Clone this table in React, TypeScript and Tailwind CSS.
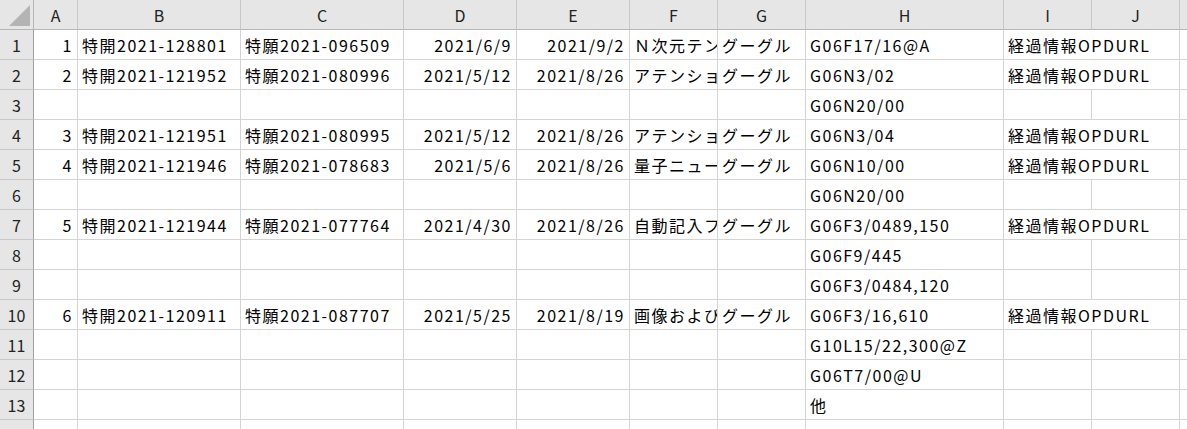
import React from "react";

// 列の幅（右の罫線を含む）
const cols = [
  { key: "A", w: "w-[44px]", align: "right" },
  { key: "B", w: "w-[163px]", align: "left" },
  { key: "C", w: "w-[163px]", align: "left" },
  { key: "D", w: "w-[113px]", align: "right" },
  { key: "E", w: "w-[113px]", align: "right" },
  { key: "F", w: "w-[88px]", align: "left" },
  { key: "G", w: "w-[88px]", align: "left" },
  { key: "H", w: "w-[198px]", align: "left" },
  { key: "I", w: "w-[88px]", align: "left" },
  { key: "J", w: "w-[88px]", align: "left" },
];

type Row = Partial<Record<string, string>>;

const rows: Row[] = [
  { A: "1", B: "特開2021-128801", C: "特願2021-096509", D: "2021/6/9", E: "2021/9/2", F: "Ｎ次元テンソルの処理", G: "グーグル", H: "G06F17/16@A", I: "経過情報OPDURL" },
  { A: "2", B: "特開2021-121952", C: "特願2021-080996", D: "2021/5/12", E: "2021/8/26", F: "アテンションベースの", G: "グーグル", H: "G06N3/02", I: "経過情報OPDURL" },
  { H: "G06N20/00" },
  { A: "3", B: "特開2021-121951", C: "特願2021-080995", D: "2021/5/12", E: "2021/8/26", F: "アテンションベースの", G: "グーグル", H: "G06N3/04", I: "経過情報OPDURL" },
  { A: "4", B: "特開2021-121946", C: "特願2021-078683", D: "2021/5/6", E: "2021/8/26", F: "量子ニューラルネット", G: "グーグル", H: "G06N10/00", I: "経過情報OPDURL" },
  { H: "G06N20/00" },
  { A: "5", B: "特開2021-121944", C: "特願2021-077764", D: "2021/4/30", E: "2021/8/26", F: "自動記入フォーム", G: "グーグル", H: "G06F3/0489,150", I: "経過情報OPDURL" },
  { H: "G06F9/445" },
  { H: "G06F3/0484,120" },
  { A: "6", B: "特開2021-120911", C: "特願2021-087707", D: "2021/5/25", E: "2021/8/19", F: "画像および動画の", G: "グーグル", H: "G06F3/16,610", I: "経過情報OPDURL" },
  { H: "G10L15/22,300@Z" },
  { H: "G06T7/00@U" },
  { H: "他" },
  {},
];

function Cell({ w, align, text }: { w: string; align: string; text?: string }) {
  return (
    <div
      className={`${w} shrink-0 h-[30px] border-r border-b border-[#d4d4d4] overflow-hidden whitespace-nowrap px-[4px] pt-[1px] flex items-center ${
        align === "right" ? "justify-end" : "justify-start"
      }`}
    >
      <span className="block">{text}</span>
    </div>
  );
}

export default function App() {
  return (
    <div className="w-[1187px] h-[429px] overflow-hidden bg-white text-black text-[16px] tracking-[1.5px] font-['Noto_Sans_CJK_JP',sans-serif]">
      {/* 列見出し */}
      <div className="flex h-[30px] bg-[#e6e6e6] tracking-normal">
        <div className="w-[34px] shrink-0 h-[30px] border-r border-b border-[#b6b6b6] relative">
          <svg width="34" height="30" className="absolute inset-0">
            <polygon points="30,5 30,26 9,26" fill="#b4b4b4" />
          </svg>
        </div>
        {cols.map((c) => (
          <div
            key={c.key}
            className={`${c.w} shrink-0 h-[30px] border-r border-[#c8c8c8] border-b border-b-[#b6b6b6] flex items-center justify-center text-[#222]`}
          >
            {c.key}
          </div>
        ))}
        <div className="flex-1 h-[30px] border-b border-[#b6b6b6]" />
      </div>

      {/* 行 */}
      {rows.map((r, i) => (
        <div key={i} className="flex h-[30px]">
          <div className="w-[34px] shrink-0 h-[30px] bg-[#e6e6e6] border-r border-r-[#9e9e9e] border-b border-b-[#c8c8c8] flex items-center justify-center text-[#222] tracking-normal">
            {i + 1}
          </div>
          {cols.slice(0, 8).map((c) => (
            <Cell key={c.key} w={c.w} align={c.align} text={r[c.key]} />
          ))}
          {r.I ? (
            <Cell w="w-[176px]" align="left" text={r.I} />
          ) : (
            <>
              <Cell w="w-[88px]" align="left" />
              <Cell w="w-[88px]" align="left" />
            </>
          )}
          <div className="flex-1 h-[30px] border-b border-[#d4d4d4]" />
        </div>
      ))}
    </div>
  );
}
